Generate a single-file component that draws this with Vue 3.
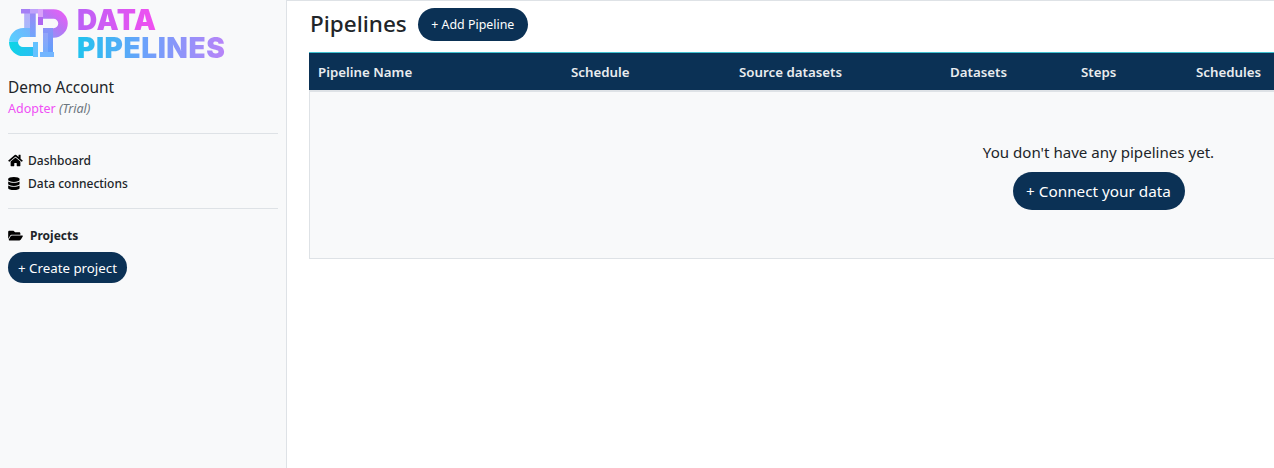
<script setup>
const columns = [
  { label: 'Pipeline Name', width: '253px' },
  { label: 'Schedule', width: '168px' },
  { label: 'Source datasets', width: '211px' },
  { label: 'Datasets', width: '131px' },
  { label: 'Steps', width: '115px' },
  { label: 'Schedules', width: '1fr' },
];

const gridColumns = columns.map((c) => c.width).join(' ');
</script>

<template>
  <div class="layout">
    <aside class="sidebar">
      <div class="logo">
        <svg class="logo-mark" width="60" height="50" viewBox="9 8 60 50" fill="none">
          <defs>
            <linearGradient id="stemGrad" x1="30" y1="38" x2="30" y2="12" gradientUnits="userSpaceOnUse">
              <stop offset="0" stop-color="#6ea6fb" />
              <stop offset="1" stop-color="#9c88f6" />
            </linearGradient>
            <linearGradient id="lowerGrad" x1="12" y1="44" x2="36" y2="54" gradientUnits="userSpaceOnUse">
              <stop offset="0" stop-color="#0fd4e6" />
              <stop offset="1" stop-color="#2cbcf4" />
            </linearGradient>
            <linearGradient id="upperGrad" x1="12" y1="42" x2="32" y2="28" gradientUnits="userSpaceOnUse">
              <stop offset="0" stop-color="#58d0ff" />
              <stop offset="1" stop-color="#74b0fc" />
            </linearGradient>
            <linearGradient id="bowlGrad" x1="44" y1="34" x2="66" y2="10" gradientUnits="userSpaceOnUse">
              <stop offset="0" stop-color="#8e96f8" />
              <stop offset="0.5" stop-color="#bb72f4" />
              <stop offset="1" stop-color="#f05cf6" />
            </linearGradient>
            <linearGradient id="pStemGrad" x1="48" y1="53" x2="48" y2="28" gradientUnits="userSpaceOnUse">
              <stop offset="0" stop-color="#5fa0fb" />
              <stop offset="1" stop-color="#8a92f8" />
            </linearGradient>
          </defs>
          <!-- d -->
          <path d="M30 13V37" stroke="url(#stemGrad)" stroke-width="11.500" />
          <rect x="24.250" y="13" width="5.750" height="16" fill="#fff" opacity="0.3" />
          <path d="M30 32.500H24A10 10 0 0 0 13.500 42" stroke="url(#upperGrad)" stroke-width="9" />
          <path d="M13.500 42A9.500 9.500 0 0 0 24 51.500H35" stroke="url(#lowerGrad)" stroke-width="9" />
          <rect x="21" y="9" width="9" height="4.500" fill="#a57ef5" />
          <rect x="30" y="9" width="9" height="4.500" fill="#c0a2fa" />
          <rect x="33" y="42" width="5" height="15" fill="#64c2ff" />
          <!-- P -->
          <path d="M40 14H53.500A9.500 9.500 0 0 1 53.500 33H48" stroke="url(#bowlGrad)" stroke-width="9.500" />
          <path d="M48 28V53" stroke="url(#pStemGrad)" stroke-width="10" />
          <rect x="43" y="33" width="5" height="19" fill="#fff" opacity="0.14" />
          <rect x="38" y="9" width="5" height="8" fill="#d9a2fa" />
          <rect x="38" y="17" width="5" height="8" fill="#b066f0" />
          <rect x="40" y="52" width="14" height="5" fill="#73b6ff" />
        </svg>
        <div class="logo-text">
          <span class="logo-data">DATA</span>
          <span class="logo-pipelines">PIPELINES</span>
        </div>
      </div>

      <div class="account">
        <div class="account-name">Demo Account</div>
        <div class="account-plan"><span class="plan">Adopter</span> <em>(Trial)</em></div>
      </div>

      <hr class="divider" />

      <nav class="nav">
        <a class="nav-item">
          <svg class="nav-icon" width="15" height="13" viewBox="0 0 576 512">
            <path d="M280.37 148.26L96 300.11V464a16 16 0 0 0 16 16l112.06-.29a16 16 0 0 0 15.92-16V368a16 16 0 0 1 16-16h64a16 16 0 0 1 16 16v95.64a16 16 0 0 0 16 16.05L464 480a16 16 0 0 0 16-16V300L295.67 148.26a12.19 12.19 0 0 0-15.3 0zM571.6 251.47L488 182.56V44.05a12 12 0 0 0-12-12h-56a12 12 0 0 0-12 12v72.61L318.47 43a48 48 0 0 0-61 0L4.34 251.47a12 12 0 0 0-1.6 16.9l25.5 31A12 12 0 0 0 45.15 301l235.22-193.74a12.19 12.19 0 0 1 15.3 0L530.9 301a12 12 0 0 0 16.9-1.6l25.5-31a12 12 0 0 0-1.7-16.93z" />
          </svg>
          Dashboard
        </a>
        <a class="nav-item">
          <svg class="nav-icon" width="15" height="13" viewBox="0 0 576 512">
            <path d="M448 73.143v45.714C448 159.143 347.667 192 224 192S0 159.143 0 118.857V73.143C0 32.857 100.333 0 224 0s224 32.857 224 73.143zM448 176v102.857C448 319.143 347.667 352 224 352S0 319.143 0 278.857V176c48.125 33.143 136.208 48.572 224 48.572S399.874 209.143 448 176zm0 160v102.857C448 479.143 347.667 512 224 512S0 479.143 0 438.857V336c48.125 33.143 136.208 48.572 224 48.572S399.874 369.143 448 336z" />
          </svg>
          Data connections
        </a>
      </nav>

      <hr class="divider" />

      <div class="projects">
        <div class="projects-title">
          <svg class="folder-icon" width="15" height="13" viewBox="0 0 576 512">
            <path d="M572.694 292.093L500.27 416.248A63.997 63.997 0 0 1 444.989 448H45.025c-18.523 0-30.064-20.093-20.731-36.093l72.424-124.155A64 64 0 0 1 152 256h399.964c18.523 0 30.064 20.093 20.73 36.093zM152 224h328v-48c0-26.51-21.49-48-48-48H272l-64-64H48C21.49 64 0 85.49 0 112v278.046l69.077-118.418C86.214 242.25 117.989 224 152 224z" />
          </svg>
          Projects
        </div>
        <button class="btn btn-create">+ Create project</button>
      </div>
    </aside>

    <main class="main">
      <div class="page-head">
        <h1>Pipelines</h1>
        <button class="btn btn-add">+ Add Pipeline</button>
      </div>

      <section class="table">
        <div class="table-head" :style="{ gridTemplateColumns: gridColumns }">
          <div v-for="col in columns" :key="col.label" class="th">{{ col.label }}</div>
        </div>
        <div class="table-empty">
          <p>You don't have any pipelines yet.</p>
          <button class="btn btn-connect">+ Connect your data</button>
        </div>
      </section>
    </main>
  </div>
</template>

<style>
html, body {
  margin: 0;
  overflow: hidden;
}
</style>

<style scoped>
.layout {
  display: flex;
  height: 468px;
  width: 1274px;
  overflow: hidden;
  background: #fff;
  color: #212529;
  font-family: "Noto Sans", "Open Sans", sans-serif;
}

.sidebar {
  box-sizing: border-box;
  flex: 0 0 287px;
  padding: 8px 8px 0;
  background: #f8f9fa;
  border-right: 1px solid #dee2e6;
}

.logo {
  display: flex;
  gap: 9px;
  height: 50px;
  padding-left: 1px;
}

.logo-mark {
  flex: none;
}

.logo-text {
  display: flex;
  flex-direction: column;
  margin: -2px 0 0 -1px;
  font-family: Inter, "Noto Sans", sans-serif;
  font-weight: 900;
  font-size: 28px;
  line-height: 28px;
  letter-spacing: 0.55px;
}

.logo-data,
.logo-pipelines {
  width: fit-content;
  background-clip: text;
  -webkit-background-clip: text;
  color: transparent;
}

.logo-data {
  background-image: linear-gradient(90deg, #bb62f6, #f24ff0);
}

.logo-pipelines {
  background-image: linear-gradient(90deg, #1fc3ee, #6aa2fb 45%, #b884f8);
}

.account {
  margin-top: 20px;
}

.account-name {
  font-size: 15.4px;
  line-height: 20px;
}

.account-plan {
  margin-top: 2px;
  font-size: 12.5px;
  line-height: 18px;
}

.plan {
  color: #ef4ff5;
}

.account-plan em {
  color: #6c757d;
}

.divider {
  margin: 15px 0 0;
  width: 270px;
  border: 0;
  border-top: 1px solid #dee2e6;
}

.nav {
  display: flex;
  flex-direction: column;
  gap: 5px;
  margin-top: 17px;
  margin-bottom: 16px;
}

.nav-item {
  display: flex;
  align-items: center;
  gap: 5px;
  height: 18px;
  font-size: 12px;
  font-weight: 500;
  color: #212529;
}

.projects {
  margin-top: 17px;
}

.projects-title {
  display: flex;
  align-items: center;
  gap: 7px;
  height: 18px;
  font-size: 12px;
  font-weight: 700;
}

.btn {
  display: block;
  box-sizing: border-box;
  border: 0;
  border-radius: 999px;
  background: #0b3155;
  color: #fff;
  font-family: inherit;
  white-space: nowrap;
  padding: 0;
}

.btn-create {
  margin-top: 8px;
  width: 119px;
  height: 31px;
  font-size: 13.3px;
}

.main {
  flex: 1;
  min-width: 0;
  padding: 8px 0 0 22px;
  border-top: 1px solid #dee2e6;
  overflow: hidden;
}

.page-head {
  display: flex;
  align-items: center;
  gap: 11px;
  height: 32px;
  margin-top: -1px;
  padding-left: 1px;
}

h1 {
  margin: 0;
  font-size: 22.5px;
  font-weight: 500;
  line-height: 30px;
}

.btn-add {
  width: 110px;
  height: 33px;
  font-size: 12.4px;
}

.table {
  box-sizing: border-box;
  width: 1580px;
  margin-top: 12px;
  border-top: 1px solid #3fc1d0;
}

.table-head {
  display: grid;
  align-items: center;
  height: 37px;
  padding-left: 9px;
  background: #0b3155;
  border-bottom: 2px solid #dee2e6;
}

.th {
  padding-top: 1px;
  font-size: 13.3px;
  font-weight: 600;
  color: #e9ecef;
}

.table-empty {
  display: flex;
  flex-direction: column;
  align-items: center;
  box-sizing: border-box;
  width: 1578px;
  height: 167px;
  padding-top: 50px;
  background: #f8f9fa;
  border-left: 1px solid #dee2e6;
  border-bottom: 1px solid #dee2e6;
}

.table-empty p {
  margin: 0 0 10px;
  font-size: 15.1px;
  line-height: 20px;
}

.btn-connect {
  width: 172px;
  height: 38px;
  font-size: 15.3px;
}
</style>
